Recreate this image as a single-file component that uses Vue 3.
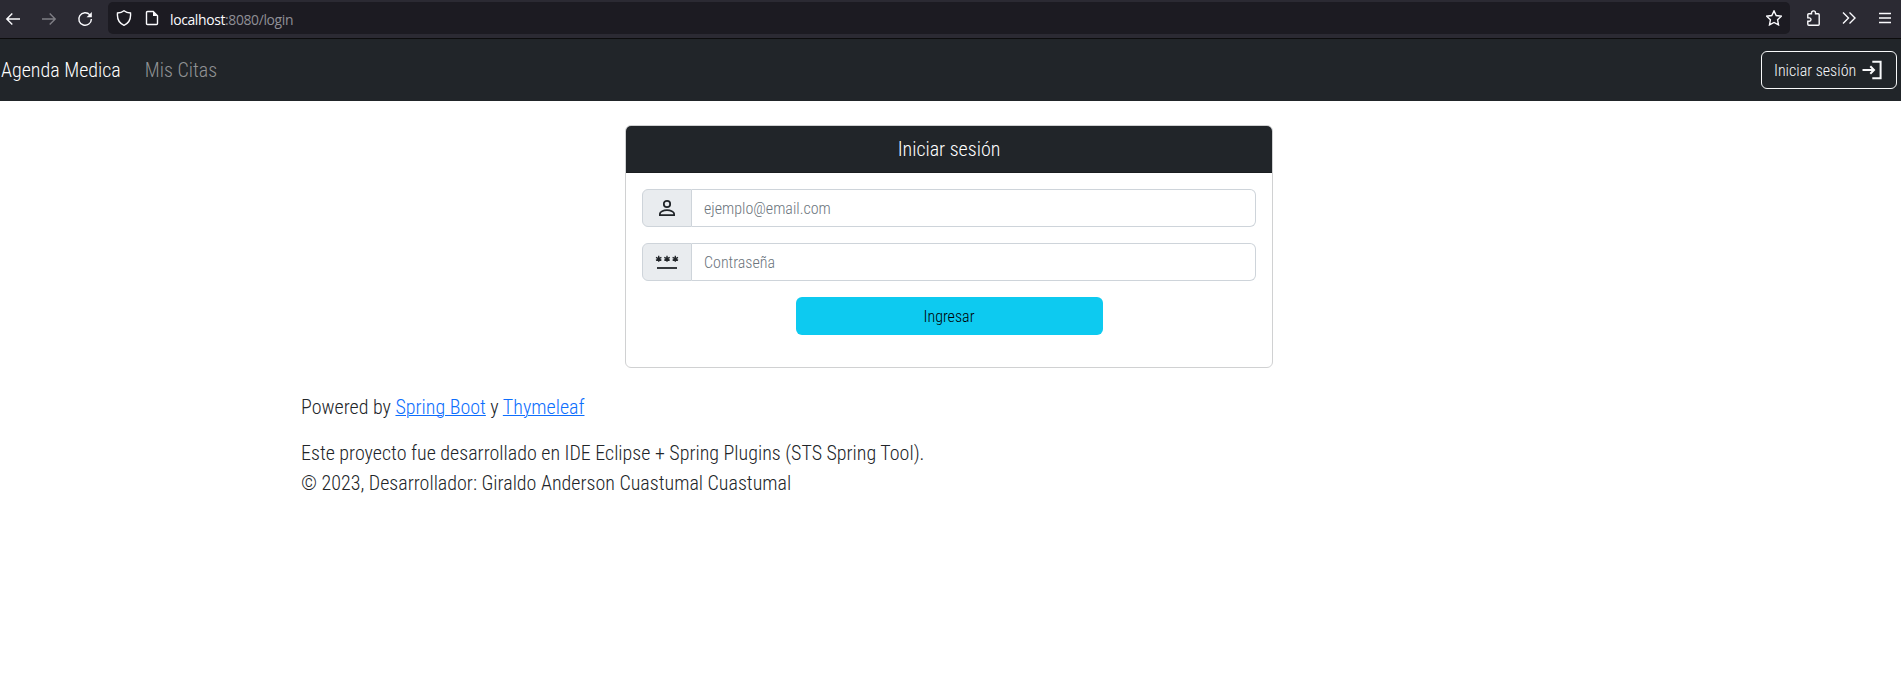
<script setup>
const fields = [
  { id: 'email', type: 'email', placeholder: 'ejemplo@email.com' },
  { id: 'password', type: 'password', placeholder: 'Contraseña' },
]
</script>

<template>
  <div class="page">
    <div class="browser">
      <div class="history">
        <svg width="16" height="16" viewBox="0 0 16 16"><path d="M15 8H1.800M7.300 2.500 1.800 8l5.500 5.500" /></svg>
        <svg class="dim" width="16" height="16" viewBox="0 0 16 16"><path d="M1 8h13.200M8.700 2.500 14.200 8l-5.500 5.500" /></svg>
        <svg width="16" height="16" viewBox="0 0 16 16"><path d="M12.900 3.900A6.300 6.300 0 1 0 14.400 8" /><path class="solid" d="M14.800 1v5.200H9.600z" /></svg>
      </div>
      <div class="address">
        <svg width="16" height="16" viewBox="0 0 16 16"><path d="M8 .8C9.500 2 12 2.900 14.500 3c.6 6-1.300 10-6.500 12.300C2.800 13 .9 9 1.500 3 4 2.900 6.500 2 8 .8z" /></svg>
        <svg class="doc" width="16" height="16" viewBox="0 0 16 16"><path d="M3.500 1.500h5.700l4.300 4.300v7.700q0 1-1 1h-9q-1 0-1-1v-11q0-1 1-1z" /><path class="solid" d="M9 1.500V6h4.500z" /></svg>
        <span class="url"><b>localhost</b>:8080/login</span>
        <svg class="star" width="16" height="16" viewBox="0 0 16 16"><path d="m8 .9 2.200 4.600 5.100.7-3.700 3.600.9 5.100L8 12.500l-4.500 2.400.9-5.100L.7 6.200l5.100-.7z" /></svg>
      </div>
      <div class="tools">
        <svg width="16" height="16" viewBox="0 0 16 16"><path d="M2.800 6.200V4.800q0-1 1-1h2.700V2.900a2 2 0 0 1 4 0v.9h2.700q1 0 1 1v9.400q0 1-1 1H3.800q-1 0-1-1v-2.900h1.500a1.700 1.700 0 0 0 0-3.400H2.800z" /></svg>
        <svg width="16" height="16" viewBox="0 0 16 16"><path d="M2 2.500 7.500 8 2 13.500M8.500 2.500 14 8l-5.500 5.500" /></svg>
        <svg width="16" height="16" viewBox="0 0 16 16"><path d="M2 3.500h12M2 8h12M2 12.500h12" /></svg>
      </div>
    </div>

    <nav class="navbar">
      <span class="brand">Agenda Medica</span>
      <span class="link">Mis Citas</span>
      <button class="login"><span>Iniciar sesión</span>
        <svg width="20" height="20" viewBox="0 0 20 20"><path d="M.5 10H12M8.300 6.300l3.700 3.700-3.700 3.700" /><path d="M10.300 1.700h8.300v16.600h-8.300" /></svg>
      </button>
    </nav>

    <main class="container">
      <section class="card">
        <header><span>Iniciar sesión</span></header>
        <form @submit.prevent>
          <div v-for="field in fields" :key="field.id" class="group">
            <label class="addon" :for="field.id">
              <svg v-if="field.id === 'email'" width="18" height="18" viewBox="0 0 18 18"><circle cx="9" cy="5" r="3.200" /><path d="M1.900 16.100v-1.300c0-2.100 3.600-3.600 7.100-3.600s7.100 1.500 7.100 3.600v1.300z" /></svg>
              <svg v-else width="24" height="18" viewBox="0 0 24 18"><g class="stars"><path v-for="x in [3.700, 12, 20.300]" :key="x" :d="`M${x} 2.800v6M${x - 2.700} 4.300l5.400 3M${x - 2.700} 7.300l5.400-3`" /></g><path d="M2 15h20" /></svg>
            </label>
            <input :id="field.id" :type="field.type" :placeholder="field.placeholder" />
          </div>
          <button class="submit"><span>Ingresar</span></button>
        </form>
      </section>

      <footer>
        <p>Powered by <a>Spring Boot</a> y <a>Thymeleaf</a></p>
        <p>Este proyecto fue desarrollado en IDE Eclipse + Spring Plugins (STS Spring Tool).<br />© 2023, Desarrollador: Giraldo Anderson Cuastumal Cuastumal</p>
      </footer>
    </main>
  </div>
</template>

<style>
body { background: #fff; }
</style>

<style scoped>
* { box-sizing: border-box; }
.page { height: 689px; font: 300 20px/30px "Roboto Condensed", Roboto, sans-serif; font-stretch: 75%; color: #212529; }
svg { fill: none; stroke: currentColor; stroke-width: 1.4; flex: none; }
.solid { fill: currentColor; stroke: none; }
.browser { height: 39px; background: #2b2a33; border-bottom: 1px solid #0c0c0d; display: flex; align-items: flex-start; color: #fbfbfe; }
.history { display: flex; gap: 20px; padding: 11px 15px 0 5px; width: 108px; }
.dim { opacity: .4; }
.address { flex: 1; height: 32px; margin-top: 2px; border-radius: 5px; background: #1c1b22; display: flex; align-items: center; padding: 0 8px; }
.doc { margin-left: 12px; }
.url { margin-left: 10px; padding-top: 3px; font: 13.900px/20px "Open Sans", sans-serif; font-stretch: 100%; letter-spacing: -.35px; color: #8f8f96; }
.url b { font-weight: 400; color: #fbfbfe; }
.star { margin-left: auto; }
.tools { width: 111px; display: flex; gap: 20px; padding: 10px 0 0 15px; }
.navbar { height: 62px; background: #212529; display: flex; align-items: center; padding: 0 4px 0 1px; color: #fff; }
.link { margin-left: 24px; color: #909294; }
button { font: inherit; font-size: 16px; line-height: 24px; height: 38px; border-radius: 6px; }
.login { margin-left: auto; width: 136px; background: transparent; border: 1px solid #f8f9fa; color: #f8f9fa; display: flex; align-items: center; padding: 0 14px 0 12px; justify-content: space-between; }
.login span, .submit span { display: block; padding-top: 2px; }
.login svg { stroke-width: 2; }
.container { width: 1320px; padding: 24px 12px 0; margin-left: 289px; }
.card { width: 648px; height: 243px; margin-left: 324px; border: 1px solid #d0d1d2; border-radius: 6px; overflow: hidden; }
.card header { height: 47px; background: #212529; color: #fff; text-align: center; line-height: 46px; border-bottom: 1px solid #1a1d20; }
form { padding: 16px; display: flex; flex-direction: column; gap: 16px; }
.group { display: flex; height: 38px; }
.addon { width: 50px; background: #e9ecef; border: 1px solid #ced4da; border-radius: 6px 0 0 6px; display: flex; align-items: center; justify-content: center; }
.addon svg { stroke-width: 1.800; }
.addon .stars { stroke-width: 1.350; }
input { flex: 1; border: 1px solid #ced4da; border-left: 0; border-radius: 0 6px 6px 0; padding: 7px 12px 5px; font: inherit; font-size: 16px; line-height: 24px; outline: 0; }
input::placeholder { color: #6c757d; opacity: 1; }
.submit { width: 307px; align-self: center; background: #0dcaf0; border: 0; color: #000; }
footer { padding-top: 24px; }
p { margin: 0 0 16px; }
a { color: #0d6efd; text-decoration: underline 1px; }
</style>
